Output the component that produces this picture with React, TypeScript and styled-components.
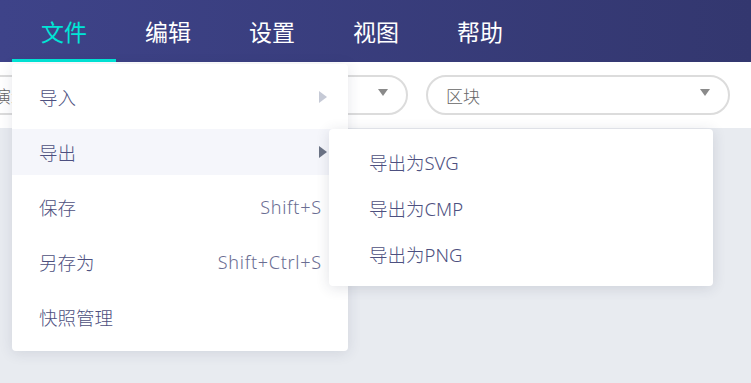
import React from "react";
import styled, { createGlobalStyle } from "styled-components";

const GlobalStyle = createGlobalStyle`
    html, body {
        margin: 0;
        padding: 0;
        height: 100%;
        overflow: hidden;
    }
    body {
        background: #e8ebf0;
        font-family: "Noto Sans", "Noto Sans CJK SC", sans-serif;
    }
`;

const Page = styled.div`
    position: relative;
    width: 751px;
    height: 383px;
    overflow: hidden;
    background: #e8ebf0;
`;

const Navbar = styled.nav`
    display: flex;
    align-items: stretch;
    height: 62px;
    padding-left: 12px;
    background: linear-gradient(to right, #3e4389, #33376f);
`;

const NavItem = styled.div<{ $active?: boolean }>`
    display: flex;
    align-items: center;
    padding: 0 29px;
    font-size: 23px;
    color: ${(p) => (p.$active ? "#00e5d6" : "#ffffff")};
    box-shadow: ${(p) => (p.$active ? "inset 0 -3px 0 #00e5d6" : "none")};
    cursor: pointer;
`;

const Toolbar = styled.div`
    display: flex;
    align-items: center;
    justify-content: flex-end;
    gap: 18px;
    height: 66px;
    padding-right: 21px;
    background: #ffffff;
    overflow: hidden;
`;

const Select = styled.div<{ $width: number }>`
    flex: none;
    box-sizing: border-box;
    display: flex;
    align-items: center;
    justify-content: space-between;
    width: ${(p) => p.$width}px;
    height: 40px;
    padding: 0 18px 0 18px;
    border: 2px solid #dcdcdc;
    border-radius: 20px;
    font-size: 17px;
    font-weight: 300;
    color: #666666;
`;

const Caret = styled.span`
    width: 0;
    height: 0;
    margin-top: -6px;
    border-left: 5px solid transparent;
    border-right: 5px solid transparent;
    border-top: 7px solid #8a8a8a;
`;

const Menu = styled.div`
    position: absolute;
    left: 12px;
    top: 64px;
    width: 336px;
    box-sizing: border-box;
    padding: 10px 0 11px;
    display: flex;
    flex-direction: column;
    gap: 9px;
    background: #ffffff;
    border-radius: 4px;
    box-shadow: 0 2px 14px rgba(40, 50, 80, 0.12);
`;

const Row = styled.div<{ $hover?: boolean }>`
    position: relative;
    display: flex;
    align-items: center;
    justify-content: space-between;
    height: 46px;
    padding: 0 27px 0 27px;
    font-size: 18.5px;
    font-weight: 300;
    color: #4d5080;
    background: ${(p) => (p.$hover ? "#f5f6fb" : "transparent")};
`;

const Shortcut = styled.span`
    color: #6a6d92;
    font-size: 18px;
    font-weight: 300;
    letter-spacing: 0.7px;
    margin-right: -0.7px;
`;

const Arrow = styled.span<{ $dim?: boolean }>`
    width: 0;
    height: 0;
    margin-right: -6px;
    border-top: 6px solid transparent;
    border-bottom: 6px solid transparent;
    border-left: 8px solid ${(p) => (p.$dim ? "#c6cad6" : "#6b7385")};
`;

const SubMenu = styled.div`
    position: absolute;
    left: 317px;
    top: 0;
    width: 384px;
    box-sizing: border-box;
    padding: 10px 0 9px;
    background: #ffffff;
    border-radius: 4px;
    box-shadow: 0 2px 14px rgba(40, 50, 80, 0.14);
    z-index: 2;
`;

const SubItem = styled.div`
    display: flex;
    align-items: center;
    height: 46px;
    padding-left: 40px;
    font-size: 18.5px;
    font-weight: 300;
    color: #4d5080;
`;

const navItems = ["文件", "编辑", "设置", "视图", "帮助"];

export default function App() {
    return (
        <Page>
            <GlobalStyle />
            <Navbar>
                {navItems.map((n, i) => (
                    <NavItem key={n} $active={i === 0}>
                        {n}
                    </NavItem>
                ))}
            </Navbar>

            <Toolbar>
                <Select $width={434}>
                    <span>演示</span>
                    <Caret />
                </Select>
                <Select $width={304}>
                    <span>区块</span>
                    <Caret />
                </Select>
            </Toolbar>

            <Menu>
                <Row>
                    <span>导入</span>
                    <Arrow $dim />
                </Row>
                <Row $hover>
                    <span>导出</span>
                    <Arrow />
                    <SubMenu>
                        <SubItem>导出为SVG</SubItem>
                        <SubItem>导出为CMP</SubItem>
                        <SubItem>导出为PNG</SubItem>
                    </SubMenu>
                </Row>
                <Row>
                    <span>保存</span>
                    <Shortcut>Shift+S</Shortcut>
                </Row>
                <Row>
                    <span>另存为</span>
                    <Shortcut>Shift+Ctrl+S</Shortcut>
                </Row>
                <Row>
                    <span>快照管理</span>
                </Row>
            </Menu>
        </Page>
    );
}
